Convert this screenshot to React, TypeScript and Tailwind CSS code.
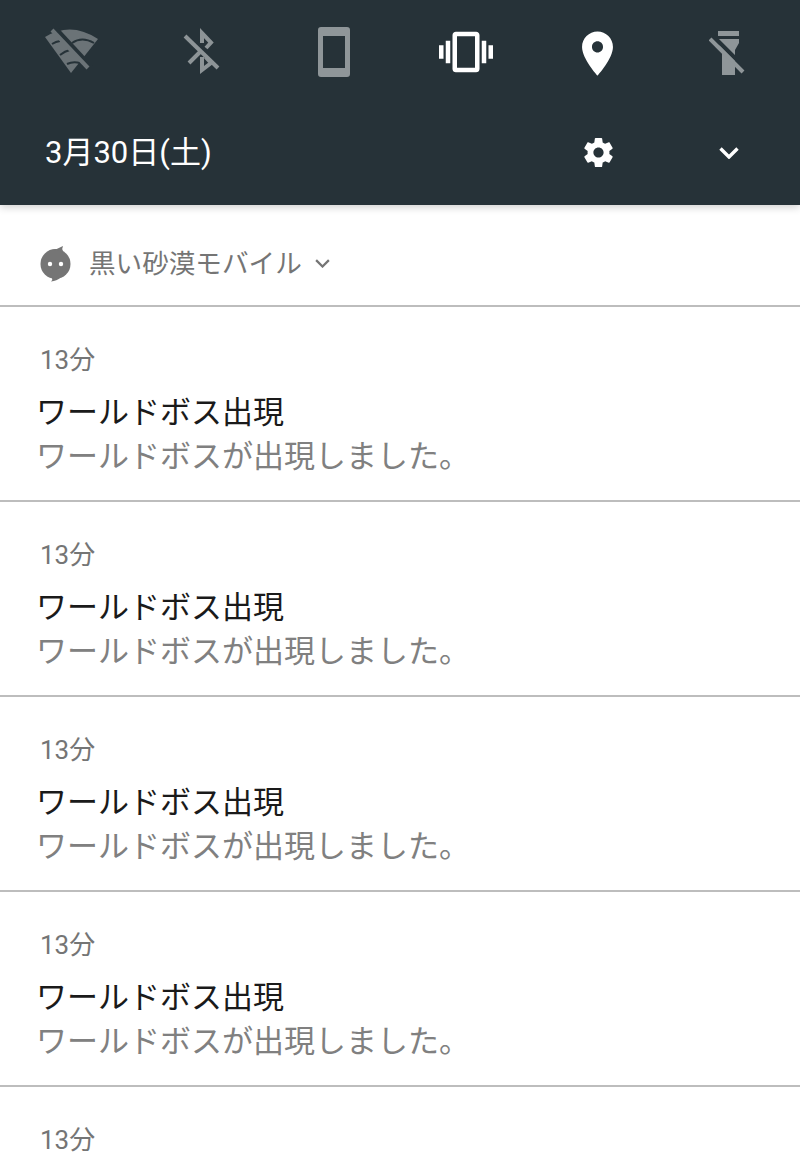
const sans = "font-['Roboto','Noto_Sans_CJK_JP',sans-serif]"

function WifiOffIcon() {
  return (
    <svg width="56" height="48" viewBox="0 0 56 48" fill="none">
      <path d="M2 9 Q28 -7 55 11 L28 45 Z" fill="#6b7377" />
      <path d="M9 16 Q13 13.500 17 13 M17 27 Q22 23 27 22 M24 36 Q30 33 37 35 M29 15 Q39 8 51 15" stroke="#263238" strokeWidth="2" />
      <path d="M11 -1 L48 39" stroke="#263238" strokeWidth="5" />
      <path d="M9 2 L45 40" stroke="#6b7377" strokeWidth="4" />
    </svg>
  )
}

function BluetoothOffIcon() {
  return (
    <svg width="40" height="50" viewBox="0 0 40 50" fill="none" stroke="#8d9497" strokeWidth="4">
      <path d="M3 9 L36 41" />
      <path d="M20 16 V6 L29 15.500 L24 21 M7 36 L19 24 M20 30 V43 L29 36 L23.500 30" />
    </svg>
  )
}

function PhoneIcon() {
  return (
    <svg width="32" height="50" viewBox="0 0 32 50">
      <path
        fillRule="evenodd"
        fill="#8f9699"
        d="M3 0h26a3 3 0 0 1 3 3v44a3 3 0 0 1-3 3H3a3 3 0 0 1-3-3V3a3 3 0 0 1 3-3zM5 9v32h22V9z"
      />
    </svg>
  )
}

function VibrateIcon() {
  return (
    <svg width="54" height="54" viewBox="0 0 24 24" fill="white">
      <path d="M0 15h2V9H0v6zm3 2h2V7H3v10zm19-8v6h2V9h-2zm-3 8h2V7h-2v10zM16.5 3h-9C6.67 3 6 3.67 6 4.5v15c0 .83.67 1.5 1.5 1.5h9c.83 0 1.5-.67 1.5-1.5v-15c0-.83-.67-1.5-1.500-1.500zM16 19H8V5h8v14z" />
    </svg>
  )
}

function PlaceIcon() {
  return (
    <svg width="53" height="53" viewBox="0 0 24 24" fill="white" className="mt-[2px]">
      <path d="M12 2C8.13 2 5 5.13 5 9c0 5.25 7 13 7 13s7-7.75 7-13c0-3.87-3.13-7-7-7zm0 9.5c-1.38 0-2.5-1.12-2.5-2.5s1.12-2.5 2.5-2.5 2.5 1.12 2.5 2.5-1.12 2.5-2.5 2.5z" />
    </svg>
  )
}

function FlashOffIcon() {
  return (
    <svg width="40" height="48" viewBox="0 0 40 48" fill="#8f9699">
      <rect x="9" y="3" width="21" height="5" />
      <path d="M9 11h21v4l-4 7v25H13V22l-4-7z" />
      <path d="M4.500 8.500 L37.500 41.500" stroke="#263238" strokeWidth="4" />
      <path d="M1 11 L34 44" stroke="#8f9699" strokeWidth="4" />
    </svg>
  )
}

function GearIcon() {
  return (
    <svg width="35" height="35" viewBox="0 0 24 24" fill="white" className="ml-[2px]">
      <path d="M19.43 12.98c.04-.32.07-.64.07-.98s-.03-.66-.07-.98l2.11-1.65c.19-.15.24-.42.12-.64l-2-3.46c-.12-.22-.39-.3-.61-.22l-2.49 1c-.52-.4-1.08-.73-1.69-.98l-.38-2.65C14.46 2.18 14.25 2 14 2h-4c-.25 0-.46.18-.49.42l-.38 2.65c-.61.25-1.17.59-1.69.98l-2.49-1c-.23-.09-.49 0-.61.22l-2 3.46c-.13.22-.07.49.12.64l2.11 1.65c-.04.32-.07.65-.07.98s.03.66.07.98l-2.11 1.65c-.19.15-.24.42-.12.64l2 3.46c.12.22.39.3.61.22l2.49-1c.52.4 1.08.73 1.69.98l.38 2.65c.03.24.24.42.49.42h4c.25 0 .46-.18.49-.42l.38-2.65c.61-.25 1.17-.59 1.69-.98l2.49 1c.23.09.49 0 .61-.22l2-3.46c.12-.22.07-.49-.12-.64l-2.11-1.65zM12 15.5c-1.93 0-3.5-1.57-3.5-3.5s1.57-3.5 3.5-3.5 3.5 1.57 3.5 3.5-1.57 3.5-3.5 3.5z" />
    </svg>
  )
}

function Chevron({ size, color, width }: { size: number; color: string; width: number }) {
  return (
    <svg width={size} height={size * 0.6} viewBox="0 0 20 12" fill="none" stroke={color} strokeWidth={width}>
      <path d="M1.5 1.5 L10 10 L18.5 1.5" />
    </svg>
  )
}

function AppIcon() {
  return (
    <svg width="32" height="36" viewBox="0 0 32 36">
      <circle cx="15.500" cy="18" r="15" fill="#757575" />
      <path d="M12 4 Q18 3 23 0 Q21.500 3 23 5z" fill="#757575" />
      <path d="M20 32 Q17 34.500 11 35.500 Q13 34 12 32z" fill="#757575" />
      <circle cx="10" cy="18" r="2.200" fill="white" />
      <circle cx="21" cy="18" r="2.200" fill="white" />
    </svg>
  )
}

function Notification({ timeOnly = false }: { timeOnly?: boolean }) {
  return (
    <div className="h-[195px] shrink-0 border-b-2 border-[#bdbdbd] pl-[36px]">
      <div className="pt-[35px] pl-[4px] text-[26px] leading-[36px] text-[#757575]">13分</div>
      {!timeOnly && (
        <>
          <div className="mt-[13px] text-[31px] leading-[44px] text-[#1a1a1a]">ワールドボス出現</div>
          <div className="text-[31px] leading-[44px] text-[#808080]">ワールドボスが出現しました。</div>
        </>
      )}
    </div>
  )
}

export default function App() {
  return (
    <div className={`flex h-[1172px] w-[800px] flex-col overflow-hidden bg-white ${sans}`}>
      <header className="relative z-10 h-[205px] shrink-0 bg-[#263238] px-[5px] shadow-[0_2px_8px_rgba(0,0,0,0.2)]">
        <div className="grid h-[104px] grid-cols-6 items-center justify-items-center">
          <WifiOffIcon />
          <BluetoothOffIcon />
          <PhoneIcon />
          <VibrateIcon />
          <PlaceIcon />
          <FlashOffIcon />
        </div>
        <div className="grid h-[96px] grid-cols-6 items-center justify-items-center">
          <div className="col-span-4 justify-self-start pt-[2px] pl-[40px] text-[31px] text-white">3月30日(土)</div>
          <GearIcon />
          <div className="pt-[2px]">
            <Chevron size={20} color="white" width={3.4} />
          </div>
        </div>
      </header>
      <div className="flex h-[102px] shrink-0 items-center gap-[17px] border-b-2 border-[#bdbdbd] pt-[18px] pl-[40px]">
        <AppIcon />
        <div className="flex items-center gap-[13px] text-[26.6px] text-[#757575]">
          黒い砂漠モバイル
          <Chevron size={15} color="#757575" width={3} />
        </div>
      </div>
      <Notification />
      <Notification />
      <Notification />
      <Notification />
      <Notification timeOnly />
    </div>
  )
}
